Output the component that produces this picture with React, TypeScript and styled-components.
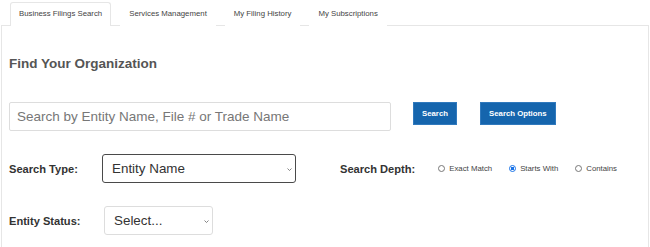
import styled, { createGlobalStyle } from "styled-components";

const GlobalStyle = createGlobalStyle`
  html, body {
    margin: 0;
    padding: 0;
    background: #fff;
  }
  body {
    font-family: "Liberation Sans", Arial, sans-serif;
  }
  * {
    box-sizing: border-box;
  }
`;

const Page = styled.div`
  width: 650px;
  padding: 2px 1px 0 1px;
`;

const TabBar = styled.div`
  display: flex;
  gap: 9px;
  padding-left: 9px;
  position: relative;
  z-index: 1;
  margin-bottom: -1px;
`;

const Tab = styled.div<{ $active?: boolean }>`
  height: 24px;
  padding: 0 8px;
  border: 1px solid ${(p) => (p.$active ? "#e6e6e6" : "transparent")};
  border-bottom: none;
  border-radius: 3px 3px 0 0;
  background: #fff;
  font-size: 7.8px;
  line-height: 22px;
  color: #444;
  white-space: nowrap;
`;

const Panel = styled.div`
  border: 1px solid #e6e6e6;
  padding: 30px 8px 20px 7px;
  min-height: 240px;
`;

const Title = styled.h2`
  margin: 0 0 30px;
  font-size: 13.5px;
  line-height: 16px;
  font-weight: bold;
  color: #555;
`;

const SearchRow = styled.div`
  display: flex;
  align-items: flex-start;
`;

const SearchInput = styled.input`
  width: 382px;
  height: 29px;
  border: 1px solid #ddd;
  border-radius: 2px;
  padding: 0 7px;
  font-family: inherit;
  font-size: 13.5px;
  color: #333;
  outline: none;
  &::placeholder {
    color: #777;
  }
`;

const BlueButton = styled.button<{ $gap: number }>`
  margin-left: ${(p) => p.$gap}px;
  height: 23px;
  padding: 0 8px;
  border: 1px solid #3079bd;
  background: #1565ad;
  color: #fff;
  font-family: inherit;
  font-size: 7.8px;
  font-weight: bold;
  cursor: pointer;
`;

const FormRow = styled.div`
  display: flex;
  align-items: center;
  margin-top: 23px;
`;

const FieldLabel = styled.label<{ $width?: number; $gap?: number }>`
  width: ${(p) => (p.$width ? `${p.$width}px` : "auto")};
  margin-left: ${(p) => p.$gap ?? 0}px;
  font-size: 11.1px;
  font-weight: bold;
  color: #333;
  white-space: nowrap;
`;

const SelectWrap = styled.div`
  position: relative;
`;

const Select = styled.select<{ $width: number; $dark?: boolean }>`
  appearance: none;
  width: ${(p) => p.$width}px;
  height: 29px;
  border: 1px solid ${(p) => (p.$dark ? "#4a4a4a" : "#ddd")};
  border-radius: 3px;
  padding: 0 14px 0 9px;
  background: #fff;
  font-family: inherit;
  font-size: 13.4px;
  color: #333;
  outline: none;
`;

const Chevron = styled.svg`
  position: absolute;
  right: 4px;
  top: 50%;
  margin-top: -1px;
  pointer-events: none;
`;

const RadioGroup = styled.div`
  display: flex;
  align-items: center;
  gap: 17px;
  margin-left: 23px;
`;

const RadioOption = styled.label`
  display: flex;
  align-items: center;
  gap: 4px;
  font-size: 7.8px;
  color: #444;
  white-space: nowrap;
`;

const RadioInput = styled.input.attrs({ type: "radio" })`
  appearance: none;
  width: 7px;
  height: 7px;
  margin: 0;
  border: 1px solid #777;
  border-radius: 50%;
  background: #fff;
  &:checked {
    border-color: #1a73e8;
    background: radial-gradient(circle, #1a73e8 0 45%, #fff 55%);
  }
`;

const tabs = ["Business Filings Search", "Services Management", "My Filing History", "My Subscriptions"];
const depths = ["Exact Match", "Starts With", "Contains"];

function Dropdown({ width, dark, value, options }: { width: number; dark?: boolean; value: string; options: string[] }) {
  return (
    <SelectWrap>
      <Select $width={width} $dark={dark} defaultValue={value}>
        {options.map((o) => (
          <option key={o}>{o}</option>
        ))}
      </Select>
      <Chevron width="5" height="3" viewBox="0 0 5 3">
        <path d="M0.5 0.5 L2.5 2.5 L4.5 0.5" fill="none" stroke="#666" strokeWidth="0.8" />
      </Chevron>
    </SelectWrap>
  );
}

export default function App() {
  return (
    <>
      <GlobalStyle />
      <Page>
        <TabBar>
          {tabs.map((t, i) => (
            <Tab key={t} $active={i === 0}>
              {t}
            </Tab>
          ))}
        </TabBar>
        <Panel>
          <Title>Find Your Organization</Title>
          <SearchRow>
            <SearchInput placeholder="Search by Entity Name, File # or Trade Name" />
            <BlueButton $gap={22}>Search</BlueButton>
            <BlueButton $gap={23}>Search Options</BlueButton>
          </SearchRow>
          <FormRow>
            <FieldLabel $width={93}>Search Type:</FieldLabel>
            <Dropdown width={194} dark value="Entity Name" options={["Entity Name", "File Number", "Trade Name"]} />
            <FieldLabel $gap={44}>Search Depth:</FieldLabel>
            <RadioGroup>
              {depths.map((d) => (
                <RadioOption key={d}>
                  <RadioInput name="depth" defaultChecked={d === "Starts With"} />
                  {d}
                </RadioOption>
              ))}
            </RadioGroup>
          </FormRow>
          <FormRow>
            <FieldLabel $width={95}>Entity Status:</FieldLabel>
            <Dropdown width={109} value="Select..." options={["Select...", "Active", "Inactive"]} />
          </FormRow>
        </Panel>
      </Page>
    </>
  );
}
